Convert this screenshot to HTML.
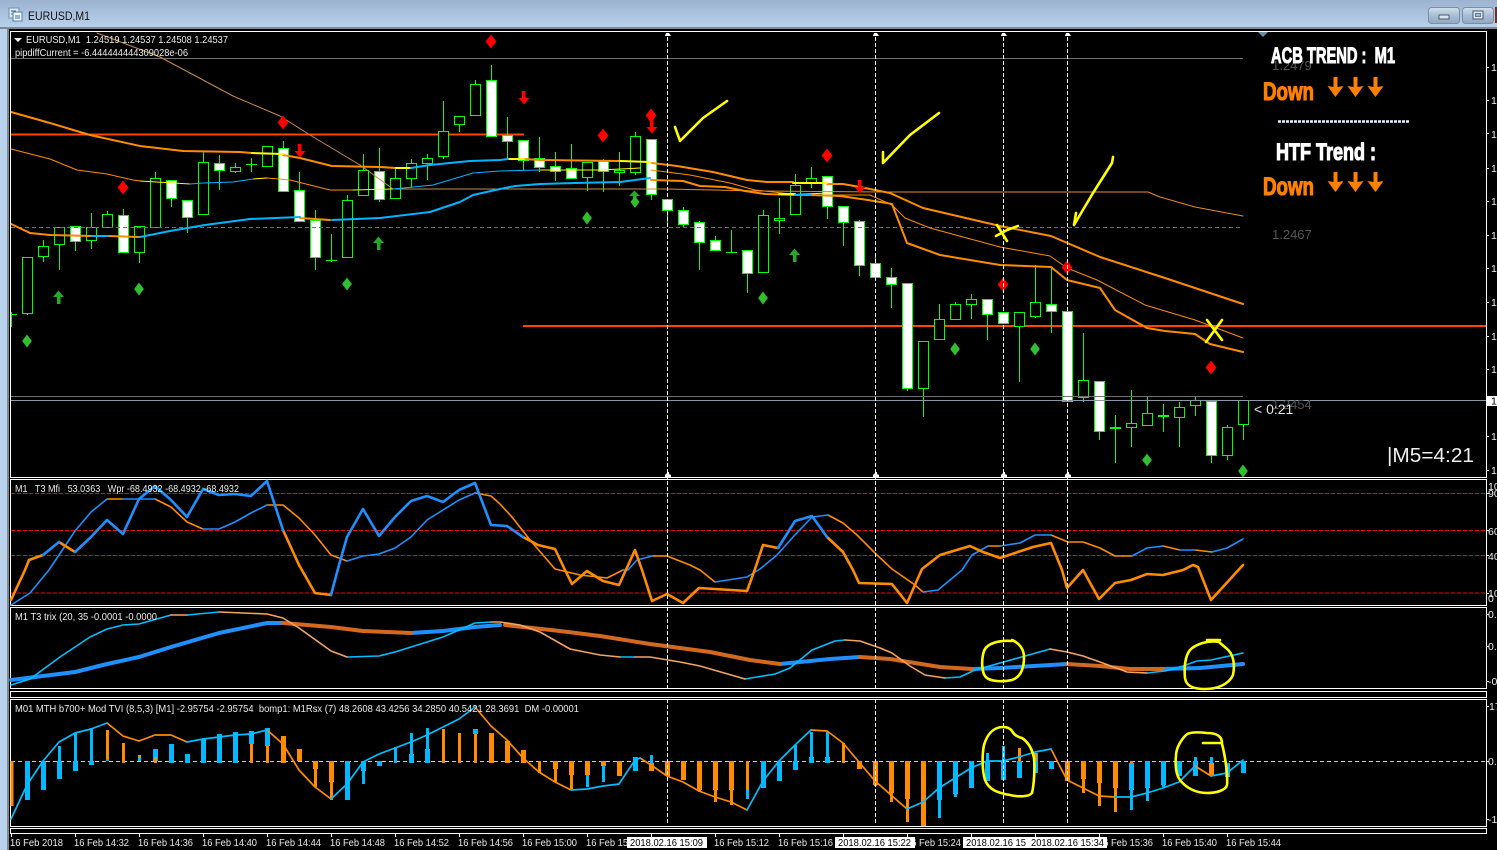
<!DOCTYPE html>
<html><head><meta charset="utf-8"><title>EURUSD,M1</title>
<style>
html,body{margin:0;padding:0;background:#000;width:1497px;height:850px;overflow:hidden}
svg{display:block}
text{font-family:"Liberation Sans",sans-serif;font-size:10.5px;fill:#ececec}
.l{fill:none;stroke-linejoin:round;stroke-linecap:round}
.imp{font-weight:bold;font-family:"Liberation Sans Narrow","Liberation Sans",sans-serif}
</style></head><body>
<svg width="1497" height="850" viewBox="0 0 1497 850" xmlns="http://www.w3.org/2000/svg">
<defs>
<linearGradient id="tb" x1="0" y1="0" x2="0" y2="1"><stop offset="0" stop-color="#9bb3cf"/><stop offset="1" stop-color="#b9d2ec"/></linearGradient>
<linearGradient id="btn" x1="0" y1="0" x2="0" y2="1"><stop offset="0" stop-color="#d3e0ee"/><stop offset=".5" stop-color="#a9bed5"/><stop offset="1" stop-color="#8ea7c2"/></linearGradient>
<clipPath id="ax"><rect x="1487" y="0" width="10" height="850"/></clipPath>
</defs>
<rect width="1497" height="850" fill="#000"/>
<!-- title bar -->
<rect width="1497" height="28" fill="url(#tb)"/>
<rect x="0" y="28" width="7" height="822" fill="#b9d2ec"/>
<rect x="0" y="27" width="1497" height="2" fill="#7d8894"/>
<rect x="7" y="27" width="2" height="823" fill="#7d8894"/>
<rect x="9" y="8" width="10" height="10" fill="#dfeaf5" stroke="#6d8fb5"/>
<rect x="13" y="12" width="9" height="9" fill="#f2f6fb" stroke="#4f7fb0"/>
<path d="M11 11h5M11 14h2M15 16h5M15 18h5" stroke="#3a6ea8" fill="none"/>
<text x="28" y="20" style="font-size:12px;fill:#111" textLength="62" lengthAdjust="spacingAndGlyphs">EURUSD,M1</text>
<rect x="1428.5" y="7.5" width="31" height="16" rx="3" fill="url(#btn)" stroke="#7b8ea5"/>
<rect x="1439" y="15" width="10" height="4" fill="#dce6f0" stroke="#4a5a6c"/>
<rect x="1462.5" y="7.5" width="31" height="16" rx="3" fill="url(#btn)" stroke="#7b8ea5"/>
<rect x="1473" y="11" width="10" height="8" fill="#dce6f0" stroke="#4a5a6c"/>
<rect x="1475.5" y="13.5" width="5" height="3" fill="#9fb3c8" stroke="#4a5a6c" stroke-width=".7"/>
<rect x="1495" y="7" width="2" height="16" fill="#7b2a2a"/>

<!-- level lines under candles -->
<path d="M11 134.5H524M523 326H1486" stroke="#ff4500" stroke-width="2" fill="none" shape-rendering="crispEdges"/>

<!-- wicks -->
<path shape-rendering="crispEdges" stroke="#00ff00" fill="none" d="M11.5 312V327M11 314.5H17M27.5 313V315M43.5 240V262M59.5 227V270M75.5 241V251M91.5 213V249M107.5 211V214M123.5 209V253M139.5 252V263M155.5 172V178M171.5 198V207M187.5 217V233M203.5 152V162M219.5 155V190M235.5 163V173M251.5 158V172M246 164.5H257M267.5 146V166M283.5 141V148M299.5 172V190M315.5 210V270M331.5 234V262M326 260.5H337M347.5 195V200M363.5 154V170M379.5 148V202M395.5 168V178M411.5 159V188M427.5 154V180M443.5 101V159M459.5 124V132M475.5 80V84M491.5 65V80M507.5 117V160M523.5 160V171M539.5 137V172M555.5 152V181M571.5 144V168M587.5 177V191M603.5 159V192M619.5 152V186M635.5 132V175M651.5 194V200M667.5 210V227M683.5 207V227M699.5 221V270M715.5 236V240M731.5 230V253M726 252.5H737M747.5 273V293M763.5 210V215M779.5 198V234M795.5 174V185M811.5 167V188M827.5 206V219M843.5 222V246M859.5 220V276M875.5 257V263M891.5 268V308M907.5 388V391M923.5 388V417M939.5 304V319M955.5 302V320M971.5 294V319M987.5 314V340M1019.5 326V382M1035.5 265V318M1051.5 267V333M1067.5 401V402M1083.5 333V402M1099.5 431V440M1115.5 415V463M1131.5 390V447M1147.5 397V413M1163.5 404V432M1179.5 402V447M1195.5 397V416M1211.5 455V463M1227.5 425V460M1243.5 424V440"/>
<path shape-rendering="crispEdges" stroke="#00ff00" stroke-width="2" fill="none" d="M1110 428H1121M1158 416H1169"/>
<!-- hollow candles -->
<path shape-rendering="crispEdges" stroke="#00ff00" fill="#000" d="M22.5 257.5h10V313.5h-10zM38.5 246.5h10V256.5h-10zM54.5 227.5h10V244.5h-10zM86.5 227.5h10V240.5h-10zM102.5 214.5h10V227.5h-10zM134.5 226.5h10V252.5h-10zM150.5 178.5h10V227.5h-10zM198.5 162.5h10V214.5h-10zM230.5 167.5h10V171.5h-10zM262.5 146.5h10V166.5h-10zM342.5 200.5h10V257.5h-10zM358.5 170.5h10V195.5h-10zM390.5 178.5h10V198.5h-10zM406.5 163.5h10V178.5h-10zM422.5 158.5h10V163.5h-10zM438.5 131.5h10V156.5h-10zM454.5 116.5h10V124.5h-10zM470.5 84.5h10V115.5h-10zM582.5 162.5h10V177.5h-10zM614.5 170.5h10V172.5h-10zM630.5 136.5h10V172.5h-10zM758.5 215.5h10V272.5h-10zM774.5 218.5h10V220.5h-10zM790.5 185.5h10V214.5h-10zM806.5 178.5h10V183.5h-10zM918.5 341.5h10V388.5h-10zM934.5 319.5h10V339.5h-10zM950.5 304.5h10V319.5h-10zM966.5 299.5h10V304.5h-10zM1014.5 312.5h10V326.5h-10zM1030.5 302.5h10V316.5h-10zM1078.5 380.5h10V397.5h-10zM1126.5 423.5h10V427.5h-10zM1142.5 413.5h10V425.5h-10zM1174.5 407.5h10V417.5h-10zM1190.5 400.5h10V405.5h-10zM1222.5 427.5h10V455.5h-10zM1238.5 400.5h10V424.5h-10z"/>
<!-- white candles -->
<path shape-rendering="crispEdges" stroke="#00ff00" fill="#fff" d="M70.5 226.5h10V241.5h-10zM118.5 215.5h10V252.5h-10zM166.5 180.5h10V198.5h-10zM182.5 200.5h10V217.5h-10zM214.5 163.5h10V170.5h-10zM278.5 148.5h10V191.5h-10zM294.5 190.5h10V221.5h-10zM310.5 220.5h10V257.5h-10zM374.5 171.5h10V199.5h-10zM486.5 80.5h10V136.5h-10zM502.5 135.5h10V141.5h-10zM518.5 140.5h10V160.5h-10zM534.5 158.5h10V167.5h-10zM550.5 166.5h10V171.5h-10zM566.5 168.5h10V178.5h-10zM598.5 161.5h10V171.5h-10zM646.5 139.5h10V194.5h-10zM662.5 199.5h10V210.5h-10zM678.5 210.5h10V224.5h-10zM694.5 222.5h10V242.5h-10zM710.5 240.5h10V250.5h-10zM742.5 250.5h10V273.5h-10zM822.5 176.5h10V206.5h-10zM838.5 206.5h10V222.5h-10zM854.5 221.5h10V265.5h-10zM870.5 263.5h10V277.5h-10zM886.5 277.5h10V284.5h-10zM902.5 283.5h10V388.5h-10zM982.5 299.5h10V314.5h-10zM998.5 312.5h10V323.5h-10zM1046.5 304.5h10V311.5h-10zM1062.5 311.5h10V401.5h-10zM1094.5 381.5h10V431.5h-10zM1206.5 401.5h10V455.5h-10z"/>
<!-- grey levels -->
<path shape-rendering="crispEdges" stroke="#707070" fill="none" d="M11 58.5H1243M11 396.5H1243"/>
<path shape-rendering="crispEdges" stroke="#707070" stroke-dasharray="4 3" fill="none" d="M11 227.5H1243"/>
<path shape-rendering="crispEdges" stroke="#8a97a6" fill="none" d="M11 400.5H1486"/>

<!-- MAs main -->
<path class="l" stroke="#c98a4a" d="M97 33L160 57L233 96L280 116L310 135L360 165L393 189H650"/>
<path class="l" stroke="#e88a2a" d="M650 189H667L760 191L880 192H1148L1160 197L1195 207L1243 216"/>
<path class="l" stroke="#ff8c00" stroke-width="1" d="M11 149L50 159L77 170L107 174L133 180L140 181M267 178M267 178L290 180L330 190L353 190M651 170L667 172L690 175L730 183L755 190L800 195L870 195L892 205L905 218L930 228L1000 247L1050 256L1067 268L1097 280L1145 305L1195 320L1243 338"/>
<path class="l" stroke="#ffff00" d="M140 181L190 184M253 179L267 178M353 190L393 189M540 170L600 170L640 168M780 195L830 193"/>
<path class="l" stroke="#00b4ff" d="M190 184L203 183L233 182L253 179M393 189L433 185L473 173L500 171L540 170"/>
<path class="l" stroke="#ff8c00" stroke-width="2" d="M11 112L50 123L90 135L140 146L183 151L240 152L252 153M283 155L300 158L332 166L380 167L396 168M524 159L540 160L620 161M652 163L677 166L713 172L747 180L767 182L793 182M827 184L843 184L860 187L875 190L890 193L923 208L1000 226L1051 236L1100 257L1165 278L1243 304"/>
<path class="l" stroke="#ff8c00" stroke-width="2" d="M11 224L30 233L50 235L92 236M108 236L140 237M300 218L330 220M651 180L683 181L700 186L725 187L745 191L765 194L795 195M811 195L840 196L868 200L892 204L907 243L940 255L1000 265L1051 267L1067 280L1100 288L1115 310L1147 328L1165 331L1195 334L1210 344L1243 352"/>
<path class="l" stroke="#ffff00" stroke-width="2" d="M252 153L283 154M396 168L411 168M508 159L524 159M620 161L650 162M793 183L827 183M779 194L795 194"/>
<path class="l" stroke="#00b4ff" stroke-width="2" d="M411 168L430 165L470 161L500 160L508 159M92 236L108 236M140 237L170 231L205 225L250 219L300 217M332 220L380 218L430 212L460 202L473 195L500 189L515 186L540 184L575 183L620 182L650 178M795 195L811 195"/>

<!-- red diamonds -->
<path fill="#f00" stroke="#f00" stroke-width=".6" d="M123 181l5 6.500l-5 6.500l-5-6.500zM283 116l5 6.500l-5 6.500l-5-6.500zM491 35l5 6.500l-5 6.500l-5-6.500zM603 129l5 6.500l-5 6.500l-5-6.500zM651 109l5 6.500l-5 6.500l-5-6.500zM827 149l5 6.500l-5 6.500l-5-6.500zM1067 261l5 6.500l-5 6.500l-5-6.500zM1003 278l5 6.500l-5 6.500l-5-6.500zM1211 361l5 6.500l-5 6.500l-5-6.500z"/>
<!-- red arrows -->
<path fill="#f00" d="M297.500 144h4v7h4l-5.500 6.500l-5.500-6.500h3.500zM521.500 91h4v7h4l-5.500 6.500l-5.500-6.500h3.500zM649.500 120h4v7h4l-5.500 6.500l-5.500-6.500h3.500zM857.500 180h4v7h4l-5.500 6.500l-5.500-6.500h3.500z"/>
<!-- green diamonds -->
<path fill="#2fbf2f" stroke="#2fbf2f" stroke-width=".6" d="M27 335l4.500 6l-4.500 6l-4.500-6zM139 283l4.500 6l-4.500 6l-4.500-6zM347 278l4.500 6l-4.500 6l-4.500-6zM587 212l4.500 6l-4.500 6l-4.500-6zM763 292l4.500 6l-4.500 6l-4.500-6zM955 343l4.500 6l-4.500 6l-4.500-6zM1035 343l4.500 6l-4.500 6l-4.500-6zM1147 454l4.500 6l-4.500 6l-4.500-6zM1243 465l4.500 6l-4.500 6l-4.500-6z"/>
<!-- green arrows -->
<path fill="#27a827" d="M57 304v-7h-4l5.500-6.500l5.500 6.500h-3.500v7zM377 250v-7h-4l5.500-6.500l5.500 6.500h-3.500v7zM633 199v-3h-4l5.500-5.500l5.500 5.500h-3.500v3zM793 262v-7h-4l5.500-6.500l5.500 6.500h-3.500v7z"/>
<path fill="#2fbf2f" d="M635 196l4.500 6l-4.500 6l-4.500-6z"/>

<!-- pane frames -->
<g shape-rendering="crispEdges" stroke="#fff" fill="none">
<path d="M10.500 31.500H1486.500V477.500H10.500z"/>
<path d="M10.500 479.500H1486.500V605.500H10.500z"/>
<path d="M10.500 607.500H1486.500V688.500H10.500z"/>
<path d="M10.500 691.500H1486.500V697.500H10.500z"/>
<path d="M10.500 699.500H1486.500V826.500H10.500z"/>
<path d="M10.500 828.500H1486.500V833.500H10.500z"/>
</g>

<!-- Mfi pane -->
<g stroke="#f00" fill="none" stroke-dasharray="4 2" shape-rendering="crispEdges">
<path d="M11 493.500H1486M11 555.500H1486M11 593H1486"/>
<path d="M11 530.500H1486" stroke-width="1.300"/>
</g>
<path class="l" stroke="#ff8c00" stroke-width="1.600" d="M107 499L123 499M139 499M155 499L171 507L187 522L203 529M267 505L283 505L299 518L315 535L331 555L347 561M475 493L491 496L500 504L512 517L530 540L555 569L580 575L607 578L623 570M652 556L667 556L690 565L700 570L715 582M828 515L843 523L857 535L877 555L892 569L915 585L923 592M988 546L1000 546M1051 535L1068 542L1083 542L1100 548L1115 556L1132 556M1163 546L1180 550M1195 550L1212 552"/>
<path class="l" stroke="#1e90ff" stroke-width="1.600" d="M11 605L30 593L49 570L75 531L91 512L107 499M123 499L155 499M203 529L219 529L235 522L251 513L267 505M347 561L363 556L379 554L395 548L411 537L427 520L443 510L459 500L475 493M623 570L628 570L637 560L652 556M715 582L747 577L760 569L777 555L793 537L812 517L828 515M923 592L938 590L962 570L972 555L988 546M1000 546L1020 543L1035 535L1051 535M1132 556L1147 548L1163 546M1180 550L1195 550M1212 552L1227 548L1243 539"/>
<path class="l" stroke="#ff8c00" stroke-width="2.600" d="M11 600L25 570L29 560L43 555M59 542L75 552M283 530L299 565L315 593L331 595M523 537L538 545L555 549L565 570L572 584L587 571L603 581L619 585L635 550L642 570L652 601L667 594L683 603L699 588L747 591L755 569L763 545L778 548M827 537L843 552L853 570L859 583L892 584L907 603L922 569L940 555L970 546L983 552L1000 558L1033 547L1051 543L1062 570L1067 588L1083 570L1099 599L1115 583L1131 580L1147 574L1163 575L1183 570L1193 565L1198 567L1211 600L1243 565"/>
<path class="l" stroke="#1e90ff" stroke-width="2.600" d="M43 555L59 542M75 552L91 537L107 520L123 534L139 499L155 486L171 500L187 517L203 489L219 495L235 494L251 496L267 481L283 530M331 595L339 565L347 537L363 509L379 536L395 517L411 501L427 496L443 502L459 490L475 483L491 525L507 526L523 537M778 548L795 521L812 516L827 537"/>

<!-- trix pane -->
<path class="l" stroke="#1e90ff" stroke-width="4" stroke-linecap="butt" d="M11 680L75 672L107 664L139 657L171 647L219 633L267 623L283 623M411 633L443 631L475 627L500 625M780 664L830 659L860 657M972 669L1000 668L1051 665L1067 664M1163 669L1200 668L1243 664"/>
<path class="l" stroke="#d2691e" stroke-width="4" stroke-linecap="butt" d="M283 623L331 627L363 631L411 633M505 625L560 631L600 636L650 644L710 652L750 660L780 664M860 657L890 659L940 667L972 669M1067 664L1100 666L1130 669L1163 669"/>
<path class="l" stroke="#00bfff" stroke-width="1.600" d="M11 685L30 679L60 657L90 637L107 629L123 625L139 624L171 615M187 615L219 612M347 657L379 656L395 652L427 642L443 637L475 623L491 622M620 657L635 657M745 679L775 674L790 668L812 650L835 641L845 640M945 678L960 677L975 670L1000 663L1050 649M1147 673L1165 671L1183 666L1197 661L1211 660L1243 653"/>
<path class="l" stroke="#f4a460" stroke-width="1.600" d="M171 615L187 615M219 612L267 614L283 618L299 628L331 651L347 657M491 622L500 622L520 625L540 632L570 649L600 655L620 657M635 657L650 657L680 662L700 666L745 679M845 640L860 641L880 648L892 653L910 666L925 675L945 678M1050 649L1067 652L1083 656L1100 662L1127 672L1147 673"/>

<!-- TVI pane -->
<path shape-rendering="crispEdges" stroke="#ccc" stroke-dasharray="4 3" fill="none" d="M11 761.500H1486"/>
<g transform="translate(.5,0)" fill="none">
<path stroke="#00b9ff" stroke-width="5" d="M27 761V800M43 761V790M59 761V779M75 761V771M91 761V765M155 749V761M171 744V763M187 754V763M203 739V763M219 734V763M235 732V763M251 731V744M267 728V746M347 761V800M363 761V771M379 761V766M411 754V763M427 749V763M475 729V734M635 757V771M763 761V788M779 761V781M795 761V770M811 757V763M827 757V763M939 761V800M955 761V794M971 761V788M987 761V781M1003 761V780M1019 761V778M1035 753V773M1051 761V769M1131 763V790M1147 761V788M1163 761V785M1179 761V776M1195 761V776M1227 763V777M1243 761V773"/>
<path stroke="#00b9ff" stroke-width="3" d="M59 746V761M75 733V761M91 728V761M107 758V761M139 758V761M395 747V763M411 733V754M427 728V749M363 771V784M587 775V787M603 766V782M651 755V763M747 790V799M795 745V761M811 732V757M827 732V757M939 800V818M955 794V797M987 753V761M1003 746V761M1131 790V810M1147 788V801M1163 785V787M1195 757V761M1211 757V763"/>
<path stroke="#ff8c00" stroke-width="5" d="M283 736V763M299 749V761M315 761V769M331 761V782M491 733V763M507 741V763M523 750V763M555 761V769M571 761V775M587 761V775M603 761V766M619 761V776M651 763V771M667 761V776M683 761V780M699 761V790M715 761V790M731 761V790M859 761V769M875 761V785M891 761V793M907 761V799M923 761V826M1067 761V781M1083 761V779M1099 761V783M1115 761V788M1211 763V776"/>
<path stroke="#ff8c00" stroke-width="3" d="M11.500 761V806M107 730V759M123 743V763M139 755V758M155 757V763M251 744V763M267 746V763M315 769V787M331 782V800M443 729V763M459 733V763M475 734V763M539 761V773M555 769V782M571 775V790M747 761V790M699 790V792M715 790V802M731 790V805M843 743V763M875 785V786M891 793V802M907 799V822M1019 748V761M1035 753V761M1083 779V793M1099 783V806M1115 788V812M1131 761V763"/>
</g>
<path class="l" stroke="#ff8c00" stroke-width="1.700" d="M107 723L123 736L139 741L155 735L171 735L187 742M267 730L283 744L299 770L315 787L331 799M475 707L491 726L507 740L523 758L539 772L555 782L571 790M640 758L651 765L667 776L683 782L699 791L715 797L731 802L747 810M811 730L827 731L843 743L859 762L875 781L891 795L907 809M1051 749L1067 780L1083 788L1099 796L1115 797M1195 766L1211 776"/>
<path class="l" stroke="#00bfff" stroke-width="1.700" d="M11 819L27 785L43 761L59 742L75 733L91 729L107 723M187 742L203 739L219 737L235 735L251 734L267 730M331 799L347 784L363 762L379 754L395 748L411 742L427 735L459 719L475 707M571 790L587 789L603 786L619 784L635 760L640 758M747 810L763 781L779 761L795 745L811 730M907 809L923 802L939 788L955 778L971 768L987 761L1003 761L1019 757L1035 752L1051 749M1115 797L1131 797L1147 793L1163 788L1179 782L1195 766M1211 776L1227 773L1243 760"/>

<!-- vertical dashed lines -->
<path shape-rendering="crispEdges" stroke="#fff" stroke-dasharray="4 2" fill="none" d="M667.500 37V688M875.500 37V688M1003.500 37V688M1067.500 37V688M667.500 699V823M875.500 699V823M1003.500 699V823M1067.500 699V823"/>
<path fill="#fff" d="M665 36l1-3h3l2 3zM873 36l1-3h3l2 3zM1001 36l1-3h3l2 3zM1065 36l1-3h3l2 3zM665 477v-2l3-3h1v2l2 1v2zM873 477v-2l3-3h1v2l2 1v2zM1001 477v-2l3-3h1v2l2 1v2zM1065 477v-2l3-3h1v2l2 1v2z"/>
<path fill="#6f8ea3" d="M1258 32h10l-5 5z"/>

<!-- yellow annotations -->
<g class="l" stroke="#ffff00" stroke-width="2.600">
<path d="M675 127L680 141L703 118L727 101"/>
<path d="M883 152L883 163L910 135L939 113"/>
<path d="M1113 157L1112 163L1093 193L1074 225L1076 213"/>
<path d="M997 225L1007 241M996 236L1007 230L1018 226"/>
<path d="M1207 320L1222 340M1222 320L1206 342"/>
<path d="M1012 641C1000 640 987 643 984 651C981 660 982 672 985 676C989 682 1003 682 1012 680C1021 677 1024 668 1024 657C1024 649 1019 643 1012 640"/>
<path d="M1207 640H1220M1219 642C1208 640 1196 644 1190 650C1185 656 1184 668 1185 678C1186 686 1193 689 1205 689C1218 689 1229 684 1233 675C1235 665 1234 654 1226 648L1219 642"/>
<path d="M1003 727C993 727 987 735 984 745C982 755 982 770 985 780C989 790 998 793 1010 795C1018 797 1029 797 1032 793C1034 785 1035 768 1034 758C1032 748 1028 742 1022 738C1018 737 1014 735 1012 731C1010 728 1007 727 1003 727"/>
<path d="M1203 743H1222C1222 736 1216 733 1207 733C1198 732 1189 732 1186 735C1181 740 1176 748 1176 756C1175 765 1176 775 1180 780C1186 788 1196 793 1207 793C1217 793 1226 790 1227 785C1228 775 1225 755 1222 744"/>
</g>

<!-- header labels -->
<path fill="#fff" d="M14 38h8l-4 4z"/>
<text x="26" y="43" textLength="202" lengthAdjust="spacingAndGlyphs" xml:space="preserve">EURUSD,M1  1.24519 1.24537 1.24508 1.24537</text>
<text x="15" y="56" textLength="173" lengthAdjust="spacingAndGlyphs">pipdiffCurrent = -6.444444444309028e-06</text>
<text x="15" y="492" textLength="224" lengthAdjust="spacingAndGlyphs" xml:space="preserve">M1   T3 Mfi   53.0363   Wpr -68.4932 -68.4932 -68.4932</text>
<text x="15" y="620" textLength="142" lengthAdjust="spacingAndGlyphs">M1 T3 trix (20, 35 -0.0001 -0.0000</text>
<text x="15" y="712" textLength="564" lengthAdjust="spacingAndGlyphs" xml:space="preserve">M01 MTH b700+ Mod TVI (8,5,3) [M1] -2.95754 -2.95754  bomp1: M1Rsx (7) 48.2608 43.4256 34.2850 40.5421 28.3691  DM -0.00001</text>

<!-- right overlay -->
<text x="1272" y="70" style="font-size:13px;fill:#565656">1.2479</text>
<text x="1272" y="239" style="font-size:13px;fill:#565656">1.2467</text>
<text x="1272" y="409" style="font-size:13px;fill:#565656">1.2454</text>
<text class="imp" x="1271" y="63" style="font-size:22px;fill:#fff;stroke:#fff;stroke-width:1" textLength="124" lengthAdjust="spacingAndGlyphs" xml:space="preserve">ACB TREND :  M1</text>
<text class="imp" x="1263" y="100" style="font-size:25px;fill:#ff8000;stroke:#ff8000;stroke-width:1.100" textLength="51" lengthAdjust="spacingAndGlyphs">Down</text>
<text class="imp" x="1276" y="160" style="font-size:24px;fill:#fff;stroke:#fff;stroke-width:1.100" textLength="100" lengthAdjust="spacingAndGlyphs">HTF Trend :</text>
<text class="imp" x="1263" y="195" style="font-size:25px;fill:#ff8000;stroke:#ff8000;stroke-width:1.100" textLength="51" lengthAdjust="spacingAndGlyphs">Down</text>
<path fill="#ff8000" d="M1333.500 77h4v10l6-1l-8 11l-8-11l6 1zM1353.500 77h4v10l6-1l-8 11l-8-11l6 1zM1373.500 77h4v10l6-1l-8 11l-8-11l6 1zM1333.500 172h4v10l6-1l-8 11l-8-11l6 1zM1353.500 172h4v10l6-1l-8 11l-8-11l6 1zM1373.500 172h4v10l6-1l-8 11l-8-11l6 1z"/>
<path d="M1278 121.500H1410" stroke="#e6f2ff" stroke-width="2.600" stroke-dasharray="3 1" fill="none"/>
<text x="1254" y="414" style="font-size:14px;fill:#e4e4e4" xml:space="preserve">&lt; 0:21</text>
<text x="1387" y="462" style="font-size:20px;fill:#eee" textLength="87" lengthAdjust="spacingAndGlyphs">|M5=4:21</text>

<!-- right axis -->
<path shape-rendering="crispEdges" stroke="#fff" fill="none" d="M1486 67.500h3M1486 100.500h3M1486 133.500h3M1486 168.500h3M1486 201.500h3M1486 235.500h3M1486 268.500h3M1486 302.500h3M1486 336.500h3M1486 369.500h3M1486 436.500h3M1486 470.500h3M1486 493.500h3M1486 530.500h3M1486 555.500h3M1486 593.500h3M1486 614.500h3M1486 646.500h3M1486 681.500h3M1486 706.500h3M1486 761.500h3M1486 819.500h3"/>
<g clip-path="url(#ax)">
<text x="1491" y="71">1.2</text><text x="1491" y="104">1.2</text><text x="1491" y="138">1.2</text><text x="1491" y="172">1.2</text><text x="1491" y="205">1.2</text><text x="1491" y="239">1.2</text><text x="1491" y="272">1.2</text><text x="1491" y="306">1.2</text><text x="1491" y="340">1.2</text><text x="1491" y="373">1.2</text><text x="1491" y="440">1.2</text><text x="1491" y="474">1.2</text>
<rect x="1487" y="396" width="10" height="10" fill="#fff"/>
<text x="1491" y="404.500" style="fill:#000">1.2</text>
<text x="1488" y="490">100</text><text x="1488" y="497">90</text><text x="1488" y="535">60</text><text x="1488" y="560">40</text><text x="1488" y="597">10</text><text x="1488" y="602">0</text>
<text x="1488" y="618">0.0</text><text x="1488" y="650">0.0</text><text x="1488" y="685">-0.0</text>
<text x="1489" y="710">17</text><text x="1488" y="765">0.0</text><text x="1488" y="823">-17</text>
</g>

<!-- time axis -->
<path shape-rendering="crispEdges" stroke="#fff" fill="none" d="M11.500 833v4M75.500 833v4M139.500 833v4M203.500 833v4M267.500 833v4M331.500 833v4M395.500 833v4M459.500 833v4M523.500 833v4M587.500 833v4M651.500 833v4M715.500 833v4M779.500 833v4M843.500 833v4M907.500 833v4M971.500 833v4M1035.500 833v4M1099.500 833v4M1163.500 833v4M1227.500 833v4"/>
<g>
<text x="10" y="846" textLength="53" lengthAdjust="spacingAndGlyphs">16 Feb 2018</text>
<text x="74" y="846" textLength="55" lengthAdjust="spacingAndGlyphs">16 Feb 14:32</text>
<text x="138" y="846" textLength="55" lengthAdjust="spacingAndGlyphs">16 Feb 14:36</text>
<text x="202" y="846" textLength="55" lengthAdjust="spacingAndGlyphs">16 Feb 14:40</text>
<text x="266" y="846" textLength="55" lengthAdjust="spacingAndGlyphs">16 Feb 14:44</text>
<text x="330" y="846" textLength="55" lengthAdjust="spacingAndGlyphs">16 Feb 14:48</text>
<text x="394" y="846" textLength="55" lengthAdjust="spacingAndGlyphs">16 Feb 14:52</text>
<text x="458" y="846" textLength="55" lengthAdjust="spacingAndGlyphs">16 Feb 14:56</text>
<text x="522" y="846" textLength="55" lengthAdjust="spacingAndGlyphs">16 Feb 15:00</text>
<text x="586" y="846" textLength="55" lengthAdjust="spacingAndGlyphs">16 Feb 15:04</text>
<text x="714" y="846" textLength="55" lengthAdjust="spacingAndGlyphs">16 Feb 15:12</text>
<text x="778" y="846" textLength="55" lengthAdjust="spacingAndGlyphs">16 Feb 15:16</text>
<text x="906" y="846" textLength="55" lengthAdjust="spacingAndGlyphs">16 Feb 15:24</text>
<text x="1098" y="846" textLength="55" lengthAdjust="spacingAndGlyphs">16 Feb 15:36</text>
<text x="1162" y="846" textLength="55" lengthAdjust="spacingAndGlyphs">16 Feb 15:40</text>
<text x="1226" y="846" textLength="55" lengthAdjust="spacingAndGlyphs">16 Feb 15:44</text>
</g>
<rect x="627" y="837" width="80" height="11" fill="#fff"/>
<text x="630" y="846" style="fill:#000" textLength="73" lengthAdjust="spacingAndGlyphs">2018.02.16 15:09</text>
<rect x="835" y="837" width="80" height="11" fill="#fff"/>
<text x="838" y="846" style="fill:#000" textLength="73" lengthAdjust="spacingAndGlyphs">2018.02.16 15:22</text>
<rect x="963" y="837" width="144" height="11" fill="#fff"/>
<text x="966" y="846" style="fill:#000" textLength="60" lengthAdjust="spacingAndGlyphs">2018.02.16 15</text>
<text x="1031" y="846" style="fill:#000" textLength="73" lengthAdjust="spacingAndGlyphs">2018.02.16 15:34</text>
</svg>
</body></html>
